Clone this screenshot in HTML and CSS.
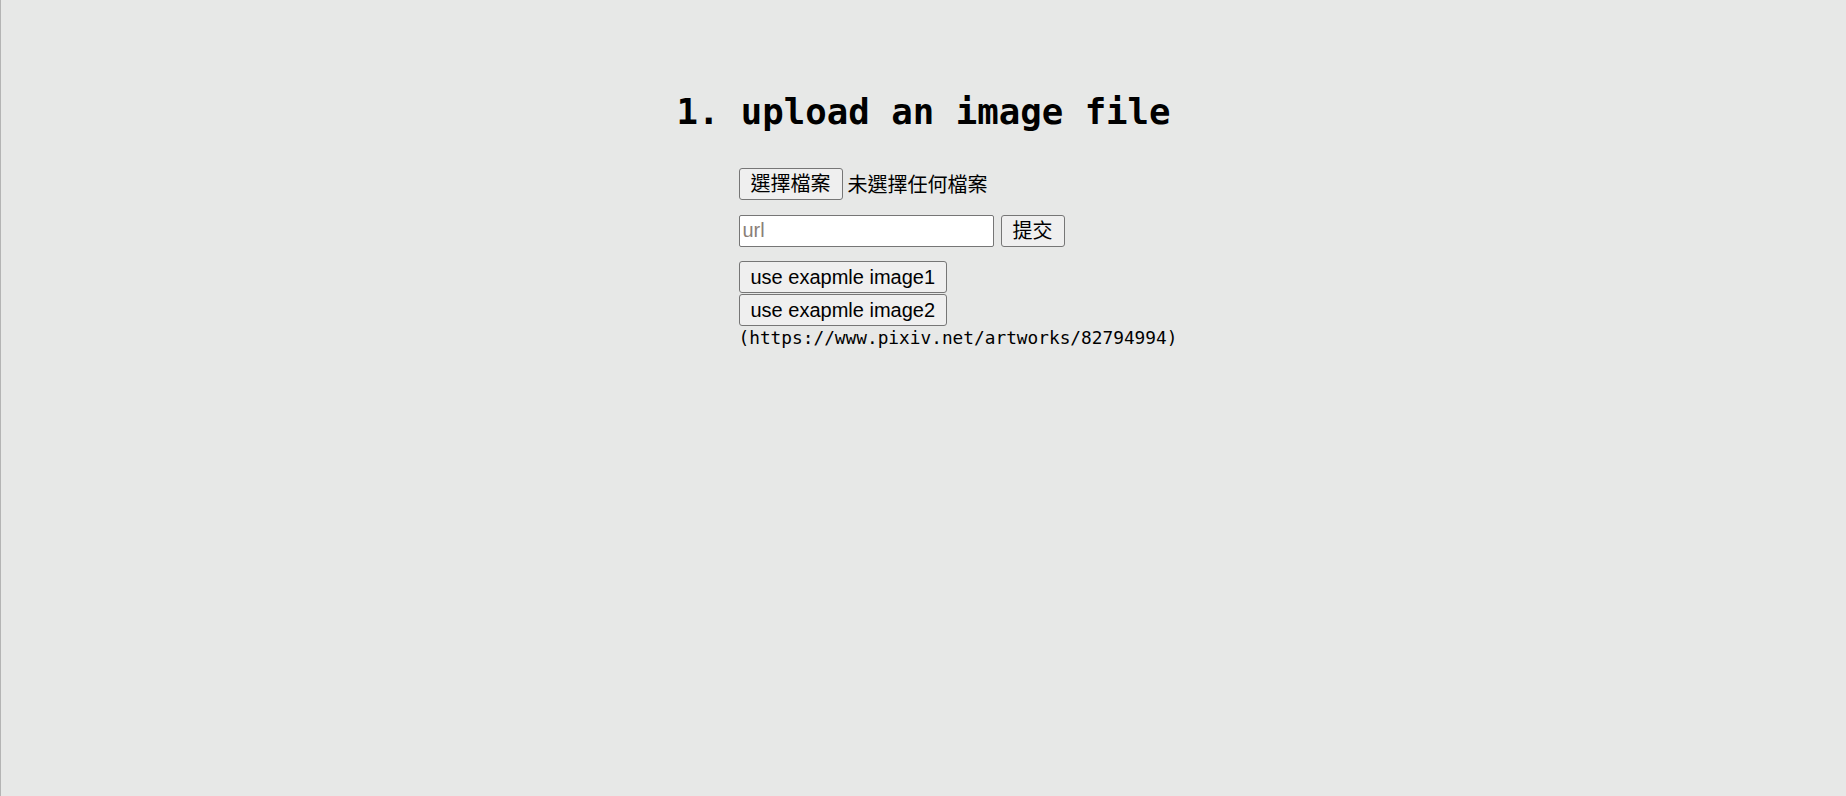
FILE: index.html
```html
<!DOCTYPE html>
<html lang="zh-Hant">
<head>
<meta charset="utf-8">
<title>upload</title>
<link rel="stylesheet" href="styles.css">
</head>
<body>
<div class="page">
  <h1 class="title">1. upload an image file</h1>
  <div class="form">
    <div class="row row-file">
      <button class="btn" type="button">選擇檔案</button>
      <span class="file-label">未選擇任何檔案</span>
    </div>
    <div class="row row-url">
      <input class="url" type="text" placeholder="url">
      <button class="btn" type="button">提交</button>
    </div>
    <div class="examples">
      <button class="btn" type="button">use exapmle image1</button>
      <button class="btn" type="button">use exapmle image2</button>
    </div>
    <div class="source">(https://www.pixiv.net/artworks/82794994)</div>
  </div>
</div>
</body>
</html>
```
FILE: styles.css
```css
html, body {
  margin: 0;
  padding: 0;
  height: 100%;
}
body {
  background: #e7e8e7;
  border-left: 1px solid #b4b4b4;
  box-sizing: border-box;
  font-family: "Liberation Sans", Arial, "Noto Sans CJK TC", sans-serif;
  color: #000;
}
.page {
  display: flex;
  flex-direction: column;
  align-items: center;
  padding-top: 91px;
}
.title {
  margin: 0;
  font-family: "DejaVu Sans Mono", "Liberation Mono", monospace;
  font-weight: bold;
  font-size: 35.7px;
  line-height: 42px;
}
.form {
  width: 437px;
  margin-top: 34px;
  margin-left: 67px;
  display: flex;
  flex-direction: column;
  align-items: flex-start;
}
.row {
  display: flex;
  align-items: center;
}
.row-file {
  height: 33px;
  margin-bottom: 14px;
}
.row-url {
  height: 33px;
  margin-bottom: 14px;
  gap: 7px;
}
.btn {
  height: 32px;
  padding: 0 11px;
  margin: 0;
  border: 1px solid #767676;
  border-radius: 3px;
  background: #efefef;
  color: #000;
  font-family: "Liberation Sans", Arial, "Noto Sans CJK TC", sans-serif;
  font-size: 20px;
  line-height: 30px;
}
.file-label {
  margin-left: 5px;
  font-size: 20px;
  font-family: "Noto Sans CJK TC", sans-serif;
}
.url {
  width: 255px;
  height: 32px;
  box-sizing: border-box;
  margin: 0;
  padding: 0 3px;
  border: 1px solid #767676;
  border-radius: 2px;
  background: #fff;
  font-family: "Liberation Sans", Arial, sans-serif;
  font-size: 20px;
}
.url::placeholder {
  color: #8a7f78;
}
.examples {
  display: flex;
  flex-direction: column;
  align-items: flex-start;
  gap: 1px;
}
.source {
  margin-top: 1px;
  font-family: "DejaVu Sans Mono", "Liberation Mono", monospace;
  font-size: 17.8px;
  line-height: 22px;
  white-space: nowrap;
}
```
